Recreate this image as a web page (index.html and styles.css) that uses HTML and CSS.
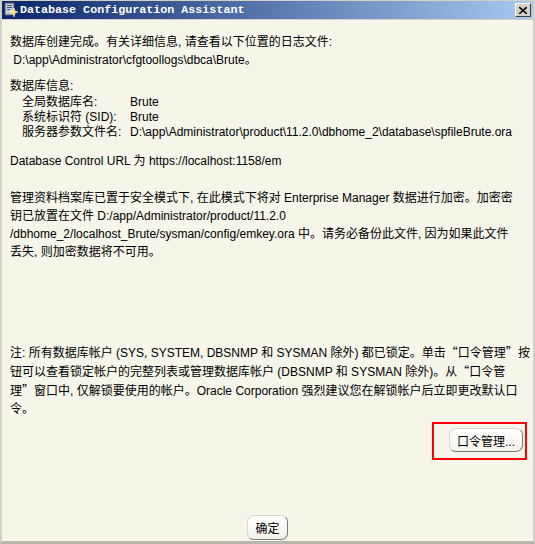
FILE: index.html
```html
<!DOCTYPE html>
<html>
<head>
  <title>Database Configuration Assistant</title>
  <link rel="stylesheet" href="styles.css">
</head>
<body>
  <div class="window">
    <div class="title-bar">
      <svg class="app-icon" width="16" height="16" viewBox="0 0 16 16">
        <rect x="2" y="1" width="9" height="12" fill="#c8ccd8" stroke="#4a5470" stroke-width="1"/>
        <rect x="4" y="3" width="5" height="1" fill="#4a5470"/>
        <rect x="4" y="5" width="5" height="1" fill="#4a5470"/>
        <rect x="4" y="7" width="3" height="1" fill="#4a5470"/>
        <path d="M11 6 L12 9 L15 10 L12 11 L11 15 L10 11 L7 10 L10 9 Z" fill="#ffe84a" stroke="#fff8c0" stroke-width="0.5"/>
      </svg>
      <span class="title-text">Database Configuration Assistant</span>
      <span class="close-btn">
        <svg width="8" height="7" viewBox="0 0 8 7">
          <path d="M0 0 L8 7 M8 0 L0 7" stroke="#000" stroke-width="1.6"/>
        </svg>
      </span>
    </div>

    <div class="content">
      <p class="log-info">数据库创建完成。有关详细信息, 请查看以下位置的日志文件:<br>&nbsp;D:\app\Administrator\cfgtoollogs\dbca\Brute。</p>

      <p class="db-head">数据库信息:</p>
      <div class="db-info">
        <span>全局数据库名:</span><span>Brute</span>
        <span>系统标识符 (SID):</span><span>Brute</span>
        <span>服务器参数文件名:</span><span>D:\app\Administrator\product\11.2.0\dbhome_2\database\spfileBrute.ora</span>
      </div>

      <p class="url-line">Database Control URL 为 https://localhost:1158/em</p>

      <p class="para">管理资料档案库已置于安全模式下, 在此模式下将对 Enterprise Manager 数据进行加密。加密密<br>钥已放置在文件 D:/app/Administrator/product/11.2.0<br>/dbhome_2/localhost_Brute/sysman/config/emkey.ora 中。请务必备份此文件, 因为如果此文件<br>丢失, 则加密数据将不可用。</p>

      <p class="para note">注: 所有数据库帐户 (SYS, SYSTEM, DBSNMP 和 SYSMAN 除外) 都已锁定。单击<span class="cjk">“</span>口令管理<span class="cjk">”</span>按<br>钮可以查看锁定帐户的完整列表或管理数据库帐户 (DBSNMP 和 SYSMAN 除外)。从<span class="cjk">“</span>口令管<br>理<span class="cjk">”</span>窗口中, 仅解锁要使用的帐户。Oracle Corporation 强烈建议您在解锁帐户后立即更改默认口<br>令。</p>

      <div class="pwd-row">
        <div class="highlight">
          <button class="btn pwd-btn">口令管理...</button>
        </div>
      </div>
    </div>

    <div class="footer">
      <button class="btn ok-btn">确定</button>
    </div>
  </div>
</body>
</html>
```

FILE: styles.css
```css
body {
  margin: 0;
  background-color: #f5f5e9;
}

.window {
  box-sizing: border-box;
  width: 535px;
  height: 544px;
  display: flex;
  flex-direction: column;
  background-color: #f5f5e9;
  border-top: 1px solid #d4d0c8;
  border-left: 2px solid #d4d0c8;
  border-right: 2px solid #d4d0c8;
  border-bottom: 3px solid #b8b5ab;
  font-family: "Liberation Sans", "Noto Sans CJK SC", sans-serif;
  font-size: 12px;
  color: #000;
}

.title-bar {
  height: 18px;
  display: flex;
  align-items: center;
  padding: 0 2px 0 1px;
  background: linear-gradient(to right, #0a246a, #a6caf0);
  border-bottom: 1px solid #d4d0c8;
}

.app-icon {
  margin-right: 1px;
}

.title-text {
  flex: 1;
  color: #fff;
  font-family: "Liberation Mono", monospace;
  font-weight: bold;
  font-size: 11.7px;
}

.close-btn {
  box-sizing: border-box;
  width: 16px;
  height: 14px;
  display: flex;
  align-items: center;
  justify-content: center;
  background-color: #d4d0c8;
  border: 1px solid;
  border-color: #fff #404040 #404040 #fff;
}

.content {
  flex: 1;
  padding: 13px 0 0 8px;
}

.content p {
  margin: 0;
  line-height: 18px;
  white-space: nowrap;
}

.cjk {
  font-family: "Noto Sans CJK SC", sans-serif;
}

.db-head {
  margin-top: 8px !important;
}

.db-info {
  display: grid;
  grid-template-columns: 108px auto;
  padding-left: 12px;
  line-height: 15px;
  white-space: nowrap;
}

.url-line {
  margin-top: 12px !important;
}

.para {
  margin-top: 19px !important;
}

.note {
  margin-top: 82px !important;
}

.pwd-row {
  display: flex;
  justify-content: flex-end;
  margin-top: 4px;
  padding-right: 6px;
}

.highlight {
  border: 2px solid #f00;
  padding: 4px 2px 6px 15px;
}

.btn {
  font-family: "Liberation Sans", "Noto Sans CJK SC", sans-serif;
  font-size: 12px;
  color: #000;
  height: 25px;
  background: linear-gradient(#ffffff, #f3f2ea);
  border: 1px solid;
  border-color: #d8d6cc #7a7a7a #7a7a7a #d8d6cc;
  border-radius: 7px;
  padding: 0;
}

.pwd-btn {
  width: 74px;
  height: 24px;
}

.footer {
  display: flex;
  justify-content: center;
  padding-bottom: 1px;
}

.ok-btn {
  width: 41px;
}
```
